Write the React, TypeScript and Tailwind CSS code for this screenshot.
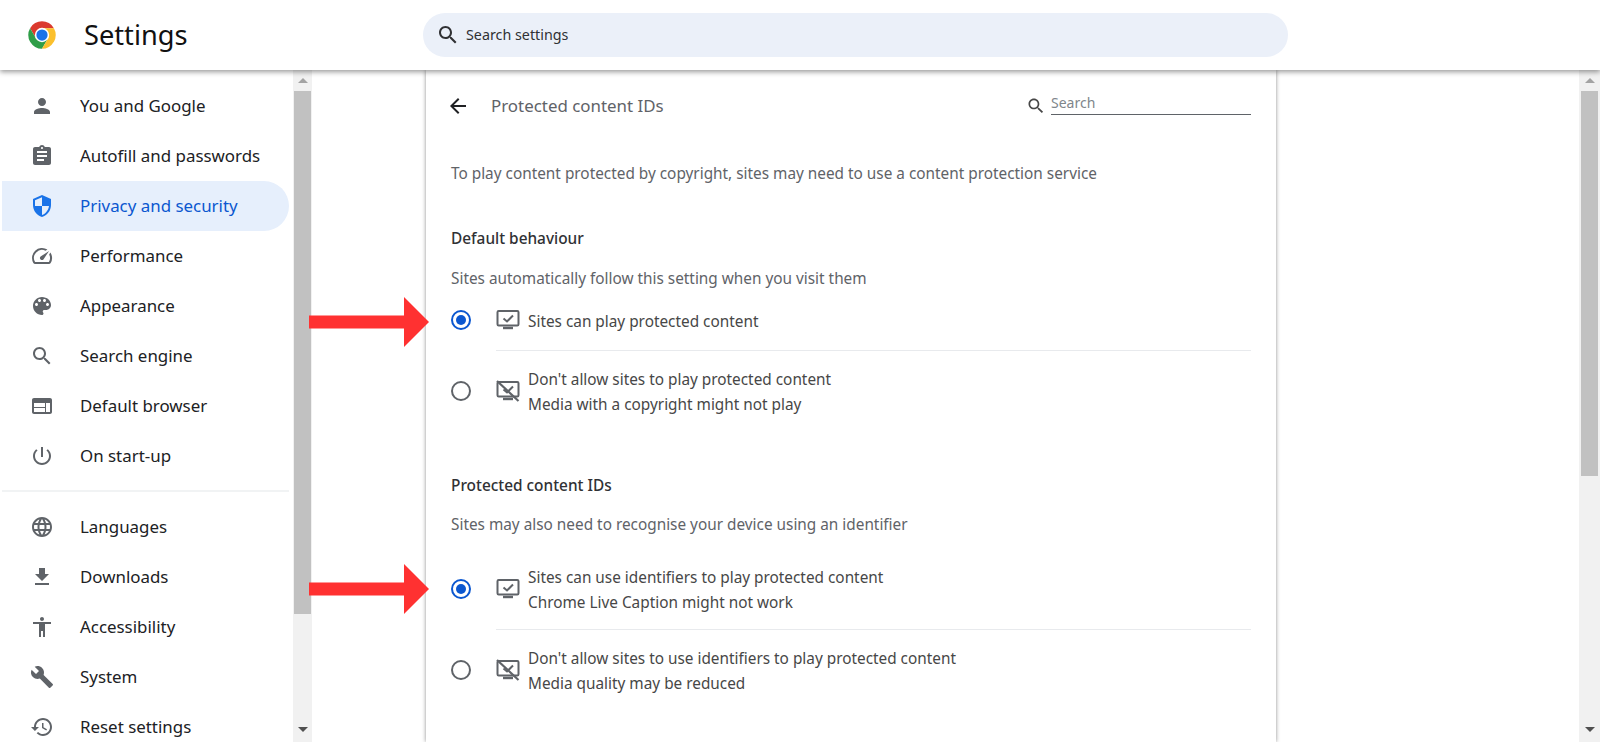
const paths = {
  person: "M12 12c2.21 0 4-1.79 4-4s-1.79-4-4-4-4 1.79-4 4 1.79 4 4 4zm0 2c-2.67 0-8 1.34-8 4v2h16v-2c0-2.66-5.33-4-8-4z",
  assignment: "M19 3h-4.18C14.4 1.84 13.3 1 12 1c-1.3 0-2.4.84-2.82 2H5c-1.1 0-2 .9-2 2v14c0 1.1.9 2 2 2h14c1.1 0 2-.9 2-2V5c0-1.1-.9-2-2-2zm-7 0c.55 0 1 .45 1 1s-.45 1-1 1-1-.45-1-1 .45-1 1-1zm2 14H7v-2h7v2zm3-4H7v-2h10v2zm0-4H7V7h10v2z",
  shield: "M12 1L3 5v6c0 5.55 3.84 10.74 9 12 5.16-1.26 9-6.45 9-12V5l-9-4zm0 10.99h7c-.53 4.12-3.28 7.79-7 8.94V12H5V6.3l7-3.11v8.8z",
  speed: "M20.38 8.57l-1.23 1.85a8 8 0 0 1-.22 7.58H5.07A8 8 0 0 1 15.58 6.85l1.85-1.23A10 10 0 0 0 3.35 19a2 2 0 0 0 1.72 1h13.85a2 2 0 0 0 1.74-1 10 10 0 0 0-.27-10.44zm-9.79 6.84a2 2 0 0 0 2.83 0l5.66-8.49-8.49 5.66a2 2 0 0 0 0 2.83z",
  palette: "M12 3c-4.97 0-9 4.03-9 9s4.03 9 9 9c.83 0 1.5-.67 1.5-1.5 0-.39-.15-.74-.39-1.01-.23-.26-.38-.61-.38-.99 0-.83.67-1.5 1.5-1.5H16c2.76 0 5-2.24 5-5 0-4.42-4.03-8-9-8zm-5.5 9c-.83 0-1.5-.67-1.5-1.5S5.67 9 6.5 9 8 9.67 8 10.5 7.33 12 6.5 12zm3-4C8.67 8 8 7.33 8 6.5S8.67 5 9.5 5s1.5.67 1.5 1.5S10.33 8 9.5 8zm5 0c-.83 0-1.5-.67-1.5-1.5S13.67 5 14.5 5s1.5.67 1.5 1.5S15.33 8 14.5 8zm3 4c-.83 0-1.5-.67-1.5-1.5S16.67 9 17.5 9s1.5.67 1.5 1.5-.67 1.5-1.5 1.5z",
  search: "M15.5 14h-.79l-.28-.27C15.41 12.59 16 11.11 16 9.5 16 5.91 13.09 3 9.5 3S3 5.91 3 9.5 5.91 16 9.5 16c1.61 0 3.09-.59 4.23-1.57l.27.28v.79l5 4.99L20.49 19l-4.99-5zm-6 0C7.01 14 5 11.99 5 9.5S7.01 5 9.5 5 14 7.01 14 9.5 11.99 14 9.5 14z",
  web: "M20 4H4c-1.1 0-2 .9-2 2v12c0 1.1.9 2 2 2h16c1.1 0 2-.9 2-2V6c0-1.1-.9-2-2-2zM4 18v-4h11v4H4zm11-5H4V9h11v4zm5 5h-4V9h4v9z",
  power: "M13 3h-2v10h2V3zm4.83 2.17l-1.42 1.42C17.99 7.86 19 9.81 19 12c0 3.87-3.13 7-7 7s-7-3.13-7-7c0-2.19 1.01-4.14 2.58-5.42L6.17 5.17C4.23 6.82 3 9.26 3 12c0 4.97 4.03 9 9 9s9-4.03 9-9c0-2.74-1.23-5.18-3.17-6.83z",
  language: "M11.99 2C6.47 2 2 6.48 2 12s4.47 10 9.99 10C17.52 22 22 17.52 22 12S17.52 2 11.99 2zm6.93 6h-2.95c-.32-1.25-.78-2.45-1.38-3.56 1.84.63 3.37 1.91 4.33 3.56zM12 4.04c.83 1.2 1.48 2.53 1.91 3.96h-3.82c.43-1.43 1.08-2.76 1.91-3.96zM4.26 14C4.1 13.36 4 12.69 4 12s.1-1.36.26-2h3.38c-.08.66-.14 1.32-.14 2 0 .68.06 1.34.14 2H4.26zm.82 2h2.95c.32 1.25.78 2.45 1.38 3.56-1.84-.63-3.37-1.9-4.33-3.56zm2.95-8H5.08c.96-1.66 2.49-2.93 4.33-3.56C8.81 5.55 8.35 6.75 8.03 8zM12 19.96c-.83-1.2-1.48-2.53-1.91-3.96h3.82c-.43 1.43-1.08 2.76-1.91 3.96zM14.34 14H9.66c-.09-.66-.16-1.32-.16-2 0-.68.07-1.35.16-2h4.68c.09.65.16 1.32.16 2 0 .68-.07 1.34-.16 2zm.25 5.56c.6-1.11 1.06-2.31 1.38-3.56h2.95c-.96 1.65-2.49 2.93-4.33 3.56zM16.36 14c.08-.66.14-1.32.14-2 0-.68-.06-1.34-.14-2h3.38c.16.64.26 1.31.26 2s-.1 1.36-.26 2h-3.38z",
  download: "M19 9h-4V3H9v6H5l7 7 7-7zM5 18v2h14v-2H5z",
  accessibility: "M12 2c1.1 0 2 .9 2 2s-.9 2-2 2-2-.9-2-2 .9-2 2-2zm9 7h-6v13h-2v-6h-2v6H9V9H3V7h18v2z",
  build: "M22.7 19l-9.1-9.1c.9-2.3.4-5-1.5-6.9-2-2-5-2.4-7.4-1.3L9 6 6 9 1.6 4.7C.4 7.1.9 10.1 2.9 12.1c1.9 1.9 4.6 2.4 6.9 1.5l9.1 9.1c.4.4 1 .4 1.4 0l2.3-2.3c.5-.4.5-1.1.1-1.4z",
  restore: "M13 3c-4.97 0-9 4.03-9 9H1l3.89 3.89.07.14L9 12H6c0-3.87 3.13-7 7-7s7 3.13 7 7-3.13 7-7 7c-1.93 0-3.68-.79-4.94-2.06l-1.42 1.42C8.27 19.99 10.51 21 13 21c4.97 0 9-4.03 9-9s-4.03-9-9-9zm-1 5v5l4.28 2.54.72-1.21-3.5-2.08V8H12z",
  back: "M20 11H7.83l5.59-5.59L12 4l-8 8 8 8 1.41-1.41L7.83 13H20v-2z",
};

const Icon = ({ d, className }: { d: string; className: string }) => (
  <svg viewBox="0 0 24 24" fill="currentColor" className={className}>
    <path d={d} />
  </svg>
);

const ChromeLogo = () => (
  <svg viewBox="0 0 48 48" className="h-[30px] w-[30px]">
    <path d="M4.95 13A22 22 0 0 1 43.05 13H24L14.47 29.5Z" fill="#db3a2e" />
    <path d="M4.95 13A22 22 0 0 0 24 46L33.53 29.5H14.47Z" fill="#2f9e48" />
    <path d="M43.05 13A22 22 0 0 1 24 46L33.53 29.5 24 13Z" fill="#fbc02d" />
    <circle cx="24" cy="24" r="11.5" fill="#fff" />
    <circle cx="24" cy="24" r="9" fill="#1a73e8" />
  </svg>
);

const Monitor = ({ off }: { off?: boolean }) => (
  <svg viewBox="0 0 24 24" fill="none" stroke="currentColor" className="h-6 w-6 shrink-0 text-[#5f6368]">
    <rect x="1.5" y="3" width="21" height="14.5" rx="1.2" strokeWidth="2" />
    <path d="M7 20h10" strokeWidth="2.4" />
    <path d="M7.5 10.5l3.5 3 6-6" strokeWidth="2" />
    {off && <path d="M1 2L22.5 22" strokeWidth="2.2" />}
  </svg>
);

const Radio = ({ on }: { on?: boolean }) =>
  on ? (
    <span className="flex h-5 w-5 shrink-0 items-center justify-center rounded-full border-2 border-[#0b57d0]">
      <span className="h-[10px] w-[10px] rounded-full bg-[#0b57d0]" />
    </span>
  ) : (
    <span className="h-5 w-5 shrink-0 rounded-full border-2 border-[#5f6368]" />
  );

const NavItem = ({ icon, label, active }: { icon: string; label: string; active?: boolean }) => (
  <div
    className={`ml-[2px] flex h-[50px] w-[287px] items-center rounded-r-[25px] pl-[28px] ${
      active ? "bg-[#e6effc] text-[#0b57d0]" : "text-[#202124]"
    }`}
  >
    <Icon d={icon} className={`h-6 w-6 shrink-0 ${active ? "text-[#1a73e8]" : "text-[#5f6368]"}`} />
    <span className="ml-[26px] text-[16.9px]">{label}</span>
  </div>
);

const OptionRow = ({
  on,
  off,
  lines,
  tall,
  divider,
}: {
  on?: boolean;
  off?: boolean;
  lines: string[];
  tall?: boolean;
  divider?: boolean;
}) => (
  <>
    <div className={`flex items-center pl-[25px] ${tall ? "h-20" : "h-14 pb-[4px]"}`}>
      <Radio on={on} />
      <div className="ml-[25px]">
        <Monitor off={off} />
      </div>
      <div className="ml-[8px] mt-[2px] text-[15.35px] leading-[25px] text-[#474747]">
        {lines.map((l) => (
          <div key={l}>{l}</div>
        ))}
      </div>
    </div>
    {divider && <div className="ml-[70px] mr-[25px] h-px bg-[#e8eaed]" />}
  </>
);

const Scrollbar = ({ thumb, className }: { thumb: string; className: string }) => (
  <div className={`flex shrink-0 flex-col items-center bg-[#f1f1f1] ${className}`}>
    <svg viewBox="0 0 10 5" className="mt-[8px] h-[5px] w-[10px] fill-[#a3a3a3]">
      <path d="M5 0l5 5H0z" />
    </svg>
    <div className={`mt-[8px] w-full bg-[#c1c1c1] ${thumb}`} />
    <svg viewBox="0 0 10 5" className="mb-[10px] mt-auto h-[5px] w-[10px] fill-[#505050]">
      <path d="M5 5l5-5H0z" />
    </svg>
  </div>
);

const RedArrow = ({ className }: { className: string }) => (
  <svg viewBox="0 0 120 50" className={`absolute z-20 h-[50px] w-[120px] fill-[#ff3131] ${className}`}>
    <path d="M0 18.5h95V0l25 25-25 25V31.5H0z" />
  </svg>
);

export default function App() {
  return (
    <div className="relative flex h-[742px] w-[1600px] flex-col overflow-hidden bg-white font-['Noto_Sans',sans-serif]">
      {/* Top bar */}
      <header className="relative z-10 flex h-[70px] shrink-0 items-center bg-white shadow-[0_2px_5px_rgba(0,0,0,0.4)]">
        <div className="ml-[27px]">
          <ChromeLogo />
        </div>
        <h1 className="ml-[27px] w-[339px] text-[27.2px] text-[#111]">Settings</h1>
        <div className="flex h-[44px] w-[865px] items-center rounded-full bg-[#ebf0f9] pl-[13px]">
          <Icon d={paths.search} className="h-[24px] w-[24px] text-[#303134]" />
          <span className="ml-[6px] text-[14.3px] text-[#303134]">Search settings</span>
        </div>
      </header>

      <div className="flex min-h-0 flex-1">
        {/* Sidebar */}
        <nav className="w-[293px] shrink-0 pt-[11px]">
          <NavItem icon={paths.person} label="You and Google" />
          <NavItem icon={paths.assignment} label="Autofill and passwords" />
          <NavItem icon={paths.shield} label="Privacy and security" active />
          <NavItem icon={paths.speed} label="Performance" />
          <NavItem icon={paths.palette} label="Appearance" />
          <NavItem icon={paths.search} label="Search engine" />
          <NavItem icon={paths.web} label="Default browser" />
          <NavItem icon={paths.power} label="On start-up" />
          <div className="my-[9px] ml-[2px] mr-[4px] h-[2px] bg-[#f1f3f4]" />
          <div className="pt-[1px]">
            <NavItem icon={paths.language} label="Languages" />
            <NavItem icon={paths.download} label="Downloads" />
            <NavItem icon={paths.accessibility} label="Accessibility" />
            <NavItem icon={paths.build} label="System" />
            <NavItem icon={paths.restore} label="Reset settings" />
          </div>
        </nav>
        <Scrollbar className="w-[19px] px-[1px]" thumb="h-[523px]" />

        {/* Main column */}
        <main className="min-w-0 flex-1">
          <section className="ml-[114px] h-full w-[850px] bg-white shadow-[0_0_4px_rgba(0,0,0,0.45)]">
            <div className="flex h-[72px] items-center pl-[20px] pr-[25px]">
              <Icon d={paths.back} className="h-6 w-6 text-[#202124]" />
              <h2 className="ml-[21px] text-[16.9px] text-[#5f6368]">Protected content IDs</h2>
              <div className="ml-auto flex items-center">
                <Icon d={paths.search} className="h-[20px] w-[20px] text-[#474747]" />
                <div className="mb-[6px] ml-[5px] h-[24px] w-[200px] border-b border-[#5f6368] text-[14px] leading-[24px] text-[#80868b]">
                  Search
                </div>
              </div>
            </div>

            <p className="mt-[19px] pl-[25px] text-[15.35px] leading-6 text-[#5f6368]">
              To play content protected by copyright, sites may need to use a content protection service
            </p>

            <h3 className="mt-[42px] pl-[25px] text-[15.4px] font-medium leading-6 text-[#303134]">Default behaviour</h3>
            <p className="mt-[15px] pl-[25px] text-[15.35px] leading-6 text-[#5f6368]">
              Sites automatically follow this setting when you visit them
            </p>
            <div className="mt-[4px]">
              <OptionRow on lines={["Sites can play protected content"]} divider />
              <OptionRow off tall lines={["Don't allow sites to play protected content", "Media with a copyright might not play"]} />
            </div>

            <h3 className="mt-[43px] pl-[25px] text-[15.4px] font-medium leading-6 text-[#303134]">Protected content IDs</h3>
            <p className="mt-[14px] pl-[25px] text-[15.35px] leading-6 text-[#5f6368]">
              Sites may also need to recognise your device using an identifier
            </p>
            <div className="mt-[13px]">
              <OptionRow on tall lines={["Sites can use identifiers to play protected content", "Chrome Live Caption might not work"]} divider />
              <OptionRow off tall lines={["Don't allow sites to use identifiers to play protected content", "Media quality may be reduced"]} />
            </div>
          </section>
        </main>
        <Scrollbar className="w-[21px] px-[2px]" thumb="h-[385px]" />
      </div>

      <RedArrow className="left-[309px] top-[297px]" />
      <RedArrow className="left-[309px] top-[564px]" />
    </div>
  );
}
